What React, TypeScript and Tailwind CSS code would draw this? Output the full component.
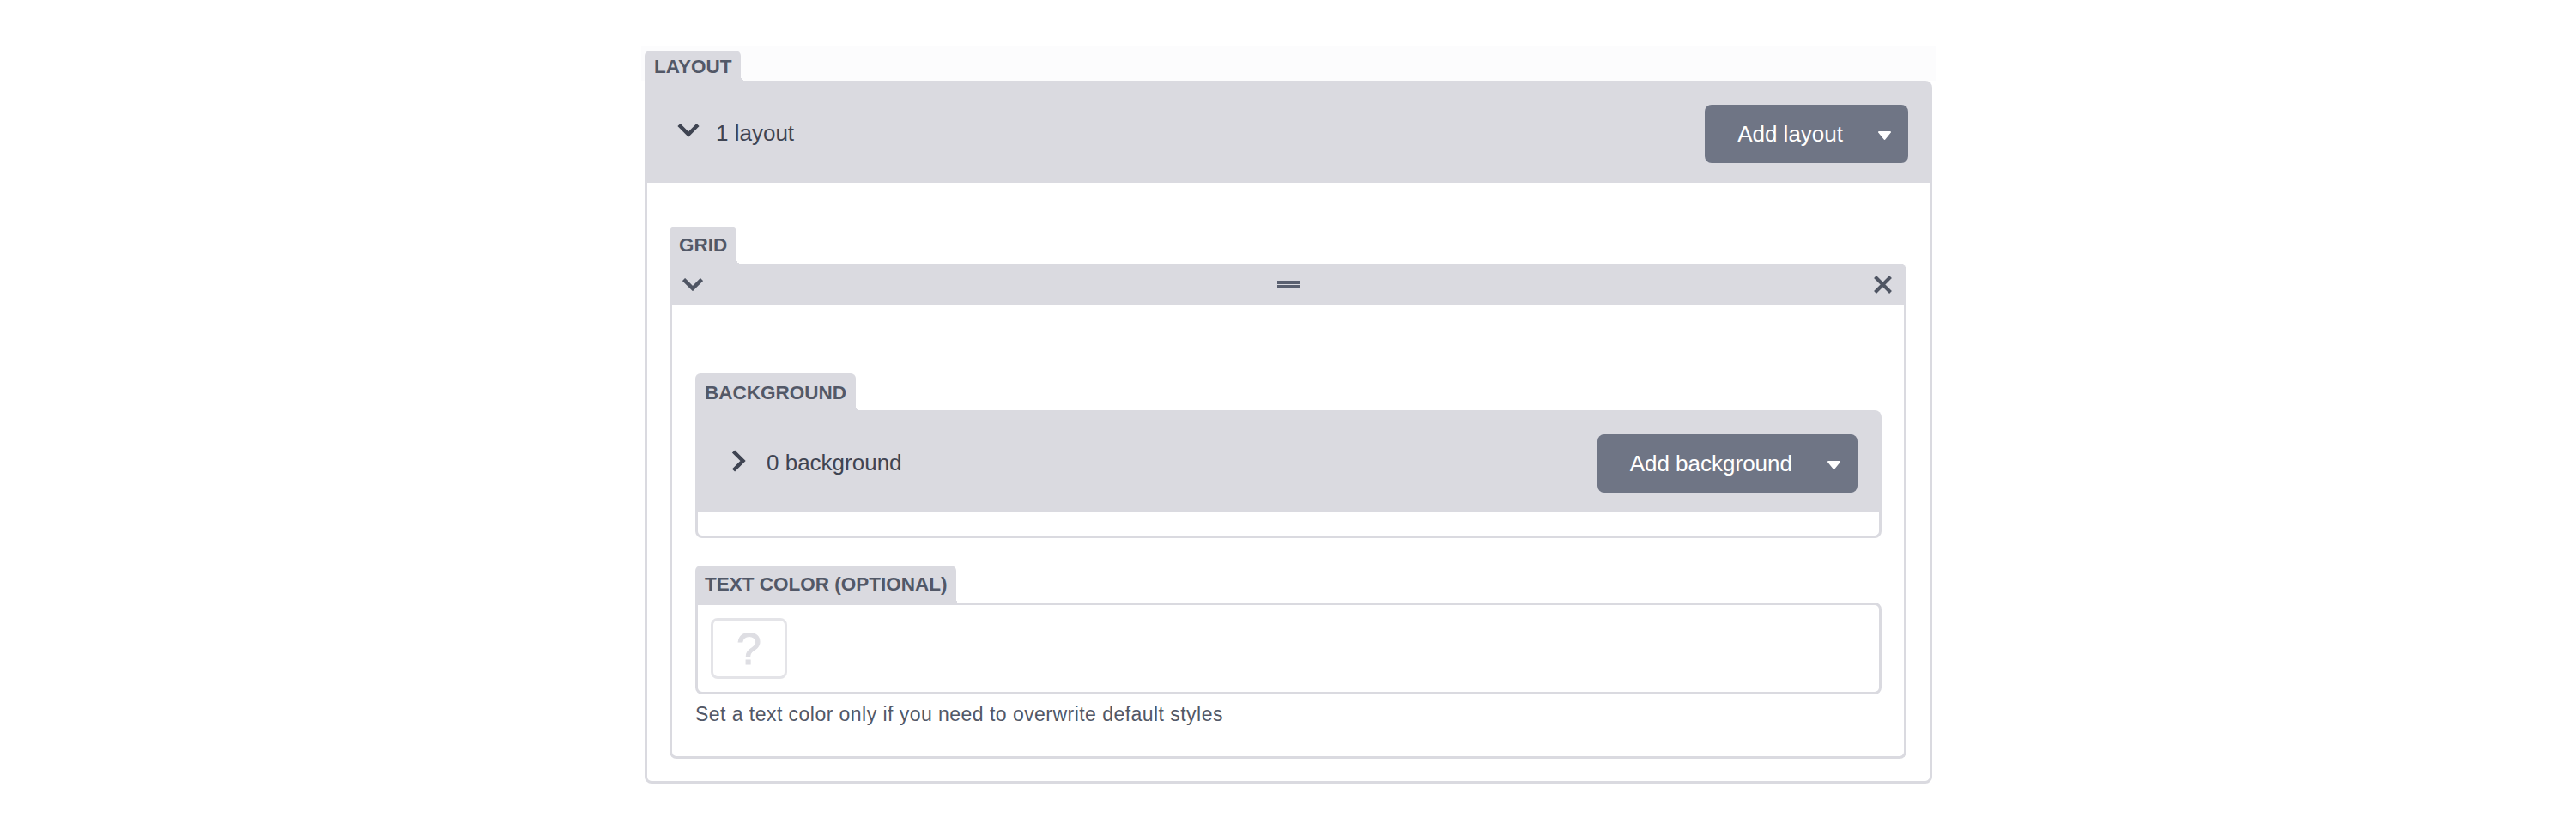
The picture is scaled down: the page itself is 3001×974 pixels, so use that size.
function Tab({ label, className }: { label: string; className: string }) {
  return (
    <div
      className={`relative w-fit rounded-t-[6px] bg-[#dadae0] px-[11px] text-[22.5px] leading-[22px] font-bold text-[#525867] after:absolute after:bottom-0 after:left-full after:h-[5px] after:w-[5px] after:bg-[radial-gradient(circle_at_top_right,transparent_5px,#dadae0_5px)] ${className}`}
    >
      {label}
    </div>
  );
}

function ChevronDown({ className }: { className?: string }) {
  return (
    <svg viewBox="0 0 32 32" className={`h-[32px] w-[32px] ${className ?? ''}`} fill="none" stroke="#3f4452" strokeWidth="4.500">
      <path d="M5 9.500 16 20.500 27 9.500" />
    </svg>
  );
}

function ChevronRight({ className }: { className?: string }) {
  return (
    <svg viewBox="0 0 32 32" className={`h-[32px] w-[32px] ${className ?? ''}`} fill="none" stroke="#3f4452" strokeWidth="4.500">
      <path d="M9.500 4 20.500 15 9.500 26" />
    </svg>
  );
}

function AddButton({ label }: { label: string }) {
  return (
    <button className="flex h-[68px] items-center gap-[41px] rounded-[8px] bg-[#6f7585] pr-[20px] pl-[38px] text-[26px] text-white">
      {label}
      <svg viewBox="0 0 15 10" className="mt-[3px] h-[10px] w-[15px]" fill="#fff">
        <path d="M1 0h13a1 1 0 0 1 .8 1.600L8.300 9.500a1 1 0 0 1-1.600 0L.2 1.600A1 1 0 0 1 1 0z" />
      </svg>
    </button>
  );
}

function CountHeader({ label, button, icon }: { label: string; button: string; icon: React.ReactNode }) {
  return (
    <div className="flex items-center justify-between rounded-tr-[8px] bg-[#dadae0] pt-[28px] pr-[28px] pb-[23px] pl-[35px]">
      <div className="mb-[3px] flex items-center gap-[16px] text-[26px] leading-[30px] text-[#3f4452]">
        {icon}
        <span>{label}</span>
      </div>
      <AddButton label={button} />
    </div>
  );
}

export default function App() {
  return (
    <div className="min-h-[974px] bg-white pt-[54px] font-['Liberation_Sans',Arial,sans-serif]">
      <div className="ml-[747px] w-[1508px]">
        <div className="h-[40px] bg-[#fcfcfd] px-[4px] pt-[5px]">
          <Tab label="LAYOUT" className="h-[35px] pt-[8px]" />
        </div>
        <div className="mx-[4px]">
          <CountHeader label="1 layout" button="Add layout" icon={<ChevronDown className="mb-[5px]" />} />
          <div className="rounded-b-[8px] border-x-[3px] border-b-[3px] border-[#dadae0] pt-[51px] pr-[27px] pb-[26px] pl-[26px]">
            <Tab label="GRID" className="h-[43px] pt-[11px]" />
            <div className="flex h-[48px] items-center justify-between rounded-tr-[8px] bg-[#dadae0] pr-[17px] pl-[15px]">
              <svg viewBox="0 0 24 15" className="h-[15px] w-[24px]" fill="none" stroke="#4f5563" strokeWidth="4.500">
                <path d="M1.500 1.500 12 12 22.500 1.500" />
              </svg>
              <div className="flex w-[26px] flex-col gap-[1px]">
                <div className="h-[4px] bg-[#5a6070]" />
                <div className="h-[4px] bg-[#5a6070]" />
              </div>
              <svg viewBox="0 0 21 21" className="h-[21px] w-[21px]" fill="none" stroke="#4f5563" strokeWidth="4">
                <path d="M1.500 1.500 19.500 19.500M19.500 1.500 1.500 19.500" />
              </svg>
            </div>
            <div className="rounded-b-[8px] border-x-[3px] border-b-[3px] border-[#dadae0] pt-[80px] pr-[26px] pb-[35px] pl-[27px]">
              <Tab label="BACKGROUND" className="h-[43px] pt-[12px]" />
              <CountHeader label="0 background" button="Add background" icon={<ChevronRight className="mt-[-2px]" />} />
              <div className="h-[30px] rounded-b-[8px] border-x-[3px] border-b-[3px] border-[#dadae0]" />
              <Tab label="TEXT COLOR (OPTIONAL)" className="mt-[32px] h-[44px] pt-[11px]" />
              <div className="mt-[-1px] h-[107px] rounded-r-[8px] rounded-bl-[8px] border-[3px] border-[#dadae0] pt-[15px] pl-[15px]">
                <div className="flex h-[71px] w-[89px] items-center justify-center rounded-[8px] border-[3px] border-[#e4e4e8] text-[52px] leading-none text-[#dedee3] [-webkit-text-stroke:1px_#dedee3]">
                  ?
                </div>
              </div>
              <p className="mt-[9px] text-[23px] leading-[28px] tracking-[0.46px] text-[#525867]">
                Set a text color only if you need to overwrite default styles
              </p>
            </div>
          </div>
        </div>
      </div>
    </div>
  );
}
